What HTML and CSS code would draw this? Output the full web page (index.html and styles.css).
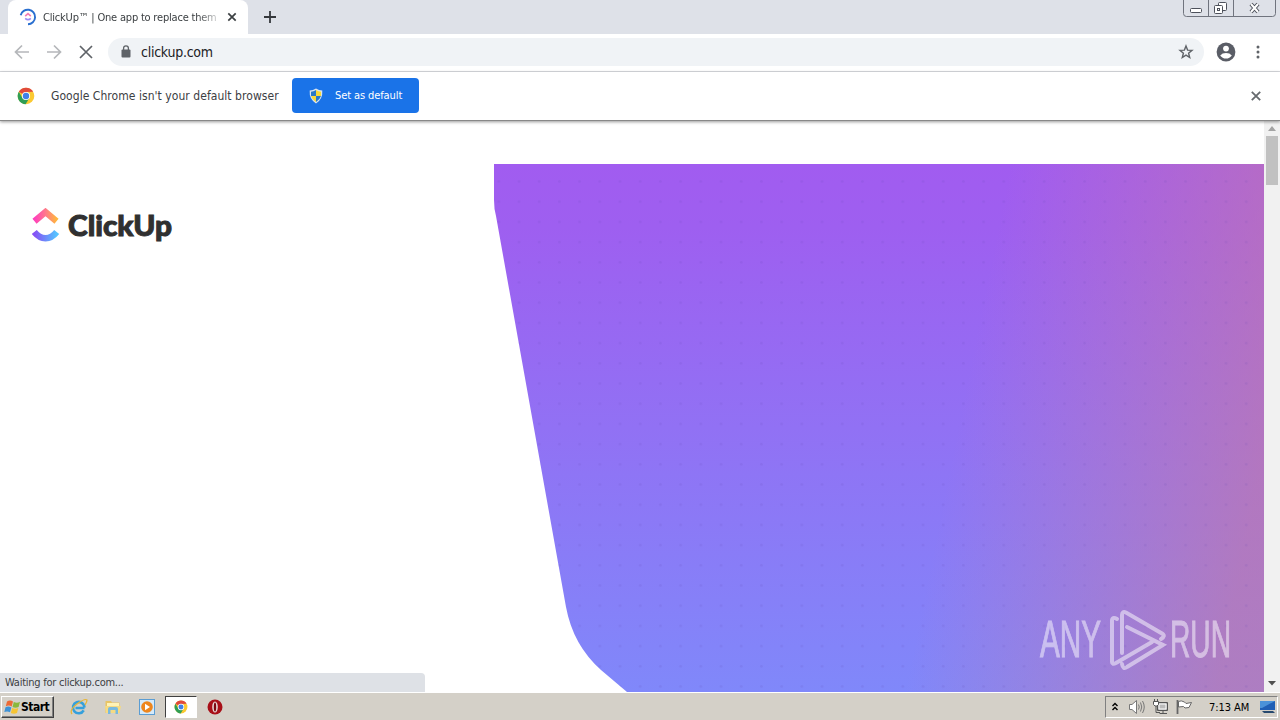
FILE: index.html
```
<!DOCTYPE html>
<html lang="en">
<head>
	<meta charset="utf-8">
	<title>ClickUp™ | One app to replace them all</title>
	<link rel="stylesheet" href="styles.css">
</head>
<body>
	<svg class="defs" width="0" height="0">
		<symbol id="chrome" viewBox="0 0 18 18">
			<circle cx="9" cy="9" r="8.3" fill="#fbc931"/>
			<path d="M9 9 1.8 4.8A8.3 8.3 0 0 1 16.2 4.8L9 5z" fill="#e04a3c"/>
			<path d="M1.8 4.8A8.3 8.3 0 0 0 8.6 17.3L12.4 11 9 9 5.5 11z" fill="#2f9e55"/>
			<circle cx="9" cy="9" r="4.1" fill="#fff"/>
			<circle cx="9" cy="9" r="3.2" fill="#3f80e8"/>
		</symbol>
	</svg>

	<div class="tabstrip">
		<div class="tab">
			<svg class="spinner" width="18" height="18" viewBox="0 0 18 18" fill="none">
				<path d="M1.7 7.2A7.3 7.3 0 1 1 9 16.3" stroke="#2a6fd0" stroke-width="1.9"/>
				<path d="M6.2 8.2 9 5.6 11.8 8.2" stroke="#f27bb5" stroke-width="1.6"/>
				<path d="M6.2 10.3Q9 13 11.8 10.3" stroke="#9b8df5" stroke-width="1.6"/>
			</svg>
			<div class="tab-title">ClickUp™ | One app to replace them</div>
			<svg width="10" height="10" viewBox="0 0 10 10"><path d="M1.3 1.3 8.7 8.7M8.7 1.3 1.3 8.7" stroke="#3c4043" stroke-width="1.7"/></svg>
		</div>
		<svg class="newtab" width="12" height="12" viewBox="0 0 12 12"><path d="M6 0V12M0 6H12" stroke="#35383c" stroke-width="1.8"/></svg>
		<svg class="winctl" width="94" height="18" viewBox="0 0 94 18" fill="none" stroke="#70747e">
			<path d="M.5 0V13.5Q.5 16.5 3.5 16.5H89.5Q92.5 16.5 92.5 13.5V0M25.5 0V16M50.5 0V16"/>
			<rect x="7.5" y="8.5" width="11" height="4" rx="1" fill="#fff" stroke="#4d515b"/>
			<g fill="#fff" stroke="#4d515b"><rect x="35.500" y="2.500" width="8" height="8" rx="1"/><rect x="31.500" y="5.500" width="8" height="8" rx="1"/><rect x="34.500" y="8.500" width="2" height="2"/></g>
			<path d="M68 4 75 12M75 4 68 12" stroke="#4d515b" stroke-width="4"/>
			<path d="M68 4 75 12M75 4 68 12" stroke="#fff" stroke-width="2"/>
		</svg>
	</div>

	<div class="toolbar">
		<svg class="nav" width="84" height="16" viewBox="0 0 84 16" fill="none" stroke-width="1.7">
			<path d="M15 8H2M8 1.5 1.500 8 8 14.500M33 8H46M40 1.500 46.500 8 40 14.500" stroke="#b5b7ba"/>
			<path d="M66 2 78 14M78 2 66 14" stroke="#5f6368"/>
		</svg>
		<div class="omnibox">
			<svg width="10" height="13" viewBox="0 0 10 13"><rect x="0.5" y="4.5" width="9" height="8" rx="1" fill="#5f6368"/><path d="M2.6 5V3.200A2.400 2.400 0 0 1 7.400 3.200V5" fill="none" stroke="#5f6368" stroke-width="1.3"/></svg>
			<span class="url">clickup.com</span>
			<svg width="16" height="16" viewBox="0 0 16 16" fill="none" stroke="#5f6368" stroke-width="1.4"><path d="M8 2 9.600 6.100 14 6.400 10.600 9.200 11.700 13.500 8 11.100 4.300 13.500 5.400 9.200 2 6.400 6.400 6.100z"/></svg>
		</div>
		<svg class="avatar" width="20" height="20" viewBox="0 0 20 20"><circle cx="10" cy="10" r="9.4" fill="#5a5d66"/><circle cx="10" cy="6.6" r="2.9" fill="#fff"/><path d="M4.200 13.400Q6.200 11 10 11T15.800 13.400Q13.700 16.500 10 16.500T4.200 13.400z" fill="#fff"/></svg>
		<svg width="4" height="14" viewBox="0 0 4 14" fill="#5f6368"><circle cx="2" cy="2" r="1.5"/><circle cx="2" cy="7" r="1.5"/><circle cx="2" cy="12" r="1.5"/></svg>
	</div>

	<div class="infobar">
		<svg width="18" height="18"><use href="#chrome"/></svg>
		<span class="info-text">Google Chrome isn't your default browser</span>
		<div class="default-btn">
			<svg width="14" height="16" viewBox="0 0 14 16">
				<path d="M7 .5Q10 2.500 13.300 2.500 14 11 7 15.500 0 11 .7 2.500 4 2.500 7 .5z" fill="#d9e4ef"/>
				<path d="M7 2Q4.500 3.600 2 3.700V8H7z" fill="#2878c8"/>
				<path d="M7 2Q9.500 3.600 12 3.700V8H7z" fill="#f7d838"/>
				<path d="M2 8H7V14Q3 11.500 2 8z" fill="#f7d838"/>
				<path d="M12 8H7V14Q11 11.500 12 8z" fill="#2878c8"/>
			</svg>
			<span>Set as default</span>
		</div>
		<svg class="info-close" width="10" height="10" viewBox="0 0 10 10"><path d="M.8.8 9.200 9.200M9.200.8.8 9.200" stroke="#666a6e" stroke-width="1.8"/></svg>
	</div>

	<div class="viewport">
		<div class="page">
			<div class="brand">
				<svg width="28" height="34" viewBox="0 0 28 34" fill="none">
					<defs>
						<linearGradient id="up"><stop offset="0" stop-color="#ff3fbd"/><stop offset=".55" stop-color="#ff7f85"/><stop offset="1" stop-color="#ffb63d"/></linearGradient>
						<linearGradient id="smile"><stop offset="0" stop-color="#8650f5"/><stop offset="1" stop-color="#55c4ff"/></linearGradient>
					</defs>
					<path d="M2.500 13.300 13.500 4 24.500 13.300" stroke="url(#up)" stroke-width="6.400"/>
					<path d="M2.300 24Q7.200 30.200 13.500 30.200T24.700 24" stroke="url(#smile)" stroke-width="6.400"/>
				</svg>
				<svg class="wordmark" width="120" height="50"><text x="1" y="28" textLength="104" lengthAdjust="spacingAndGlyphs">ClickUp</text></svg>
			</div>
			<svg class="hero" width="770" height="528" viewBox="0 0 770 528">
				<defs>
					<linearGradient id="base" x2="0" y2="1"><stop offset="0" stop-color="#a15cf0"/><stop offset=".12" stop-color="#9e5ff0"/><stop offset=".5" stop-color="#9171f4"/><stop offset="1" stop-color="#8088fa"/></linearGradient>
					<linearGradient id="rose" gradientUnits="userSpaceOnUse" x1="480" y1="180" x2="780" y2="240"><stop offset="0" stop-color="#c878a6" stop-opacity="0"/><stop offset=".4" stop-color="#c878a6" stop-opacity=".26"/><stop offset="1" stop-color="#c778a2" stop-opacity=".64"/></linearGradient>
					<pattern id="dots" width="20.200" height="20.200" x="15" y="7.500" patternUnits="userSpaceOnUse"><circle cx="10" cy="10" r="1.400" fill="#5940b0" fill-opacity=".12"/></pattern>
				</defs>
				<path d="M0 0H770V528H133L107 506Q79 481 72 443L2 52Q0 45 0 36z" fill="url(#base)"/>
				<path d="M400 0H770V528H400z" fill="url(#rose)"/>
				<path d="M0 0H770V528H133L107 506Q79 481 72 443L2 52Q0 45 0 36z" fill="url(#dots)"/>
			</svg>
		</div>
		<div class="scrollbar">
			<svg width="8" height="5" viewBox="0 0 8 5"><path d="M0 5 4 0 8 5z" fill="#a3a3a3"/></svg>
			<div class="thumb"></div>
			<svg class="down" width="8" height="5" viewBox="0 0 8 5"><path d="M0 0H8L4 4.500z" fill="#505050"/></svg>
		</div>
		<div class="status">Waiting for clickup.com...</div>
		<svg class="watermark" width="200" height="70" viewBox="0 0 200 70">
			<text x="1" y="49" textLength="61" lengthAdjust="spacingAndGlyphs">ANY</text>
			<text x="131" y="49" textLength="61" lengthAdjust="spacingAndGlyphs">RUN</text>
			<path d="M78 11Q73 8 73 13V54Q73 57 77 55L113 34M83 45V7Q83 3 87 4.500L123 25.500Q127 28 122 31M88 19 124 37 88 59Q84 62 83 56"/>
		</svg>
	</div>

	<div class="taskbar">
		<div class="start">
			<svg width="17" height="16" viewBox="0 0 17 16">
				<path d="M3 2.500Q6 .5 9 2.500L7.700 7.500Q5 5.800 1.800 7.200z" fill="#ed6a35"/>
				<path d="M9.800 3Q13 4.500 16 2.800L14.600 8Q11.500 9.500 8.500 8z" fill="#8ab83b"/>
				<path d="M1.500 8.200Q4.500 6.800 7.400 8.500L6 13.300Q3.500 11.700.3 13z" fill="#3e92d6"/>
				<path d="M8.200 9Q11.500 10.500 14.300 9L13 14Q10 15.500 6.800 14z" fill="#f6c433"/>
			</svg>
			<span>Start</span>
		</div>
		<svg class="ie" width="18" height="18" viewBox="0 0 18 18" fill="none">
			<path d="M14.500 10H5.500M14.400 9.500A5.700 5.700 0 1 0 13.700 12.300" stroke="#35a0dc" stroke-width="2.600"/>
			<path d="M2 16Q-1 12 7 6T17 2Q17 4 15 7" stroke="#e8b637" stroke-width="1.300"/>
		</svg>
		<svg class="folder" width="18" height="18" viewBox="0 0 18 18">
			<path d="M1.500 3H7L8 4.500H15.500V15H1.500z" fill="#e8c465"/><path d="M3 5H15V9H3z" fill="#fff2b5"/>
			<path d="M1 8H17L15.500 15H2z" fill="#f5da82"/><path d="M4 16V11Q4 9 6 9H12Q14 9 14 11V16H11.500V12H6.500V16z" fill="#78b9df"/>
		</svg>
		<svg class="player" width="18" height="18" viewBox="0 0 18 18"><rect x="1.500" y="1.500" width="15" height="15" fill="#d5eafa" stroke="#5b9dd3"/><circle cx="9" cy="9" r="5.800" fill="#ee861d"/><path d="M7 5.700 12 9 7 12.300z" fill="#fff"/></svg>
		<div class="active"><svg width="14" height="14"><use href="#chrome"/></svg></div>
		<svg class="opera" width="16" height="16" viewBox="0 0 16 16"><circle cx="8" cy="8" r="7.500" fill="#a80f18"/><ellipse cx="8" cy="8" rx="2.800" ry="5.600" fill="#e8d9d7"/><ellipse cx="8" cy="8" rx="1.200" ry="4.600" fill="#7c0810"/></svg>
		<div class="tray">
			<svg width="8" height="10" viewBox="0 0 8 10" fill="none" stroke="#000" stroke-width="1.400"><path d="M1.500 4 4 1.500 6.500 4M1.500 8 4 5.500 6.500 8"/></svg>
			<svg class="sound" width="18" height="16" viewBox="0 0 18 16" fill="none" stroke="#777"><path d="M1.500 5.500H4L8.500 1.500V14.500L4 10.500H1.500z" fill="#fff"/><path d="M10.500 5.500Q12 8 10.500 10.500M12.500 3.500Q15 8 12.500 12.500M14.500 2Q18 8 14.500 14"/></svg>
			<svg class="net" width="17" height="16" viewBox="0 0 17 16" stroke="#555"><path d="M5.500 3.500H15.500V11.500H5.500z" fill="#aaa"/><path d="M7 5H14V10H7z" fill="#bbb" stroke="#fff"/><path d="M7.500 14.500H15M11 12V14" fill="none"/><path d="M1.500 2.500H6.500V5.500L5 7H3L1.500 5.500zM2.500 0V2M5.500 0V2" fill="#fff"/><path d="M4 7V13.500H8" fill="none"/></svg>
			<svg class="flag" width="17" height="16" viewBox="0 0 17 16" stroke="#666"><path d="M2.500 2.500Q5 1 8.500 3L10 4.500 15.500 3.500 13 8.500 9 9 7.500 7.500 2.500 8z" fill="#fff"/><path d="M1.500 1V15" stroke-width="1.800"/></svg>
			<span class="clock">7:13 AM</span>
			<svg width="17" height="14" viewBox="0 0 17 14"><path d="M1 1H16V10H1z" fill="#205fb5"/><path d="M1 1H16L3 8H1z" fill="#4b92d9"/><path d="M3 11H14L16 13H5z" fill="#27496e"/></svg>
		</div>
	</div>
</body>
</html>
```
FILE: styles.css
```
* {
	box-sizing: border-box;
}

body {
	margin: 0;
	width: 1280px;
	height: 720px;
	overflow: hidden;
	display: flex;
	flex-direction: column;
	font: 11px "DejaVu Sans Condensed", "DejaVu Sans", sans-serif;
	font-stretch: condensed;
	color: #3c4043;
	background: #fff;
}

svg {
	display: block;
	flex: none;
}

span, .tab-title, .status {
	white-space: nowrap;
}

.defs {
	position: absolute;
}

/* browser chrome */
.tabstrip {
	display: flex;
	flex: none;
	height: 34px;
	background: #dee1e8;
}

.tab {
	display: flex;
	align-items: center;
	width: 240px;
	margin-left: 8px;
	padding: 0 10px 0 11px;
	background: #fff;
	border-radius: 8px 8px 0 0;
}

.tab-title {
	width: 176px;
	margin: 0 8px 0 6px;
	overflow: hidden;
	letter-spacing: -0.2px;
	-webkit-mask-image: linear-gradient(90deg, #000 155px, transparent 180px);
}

.newtab {
	margin: 11px 0 0 16px;
}

.winctl {
	margin-left: auto;
	margin-right: 3px;
}

.toolbar {
	display: flex;
	flex: none;
	align-items: center;
	height: 38px;
	padding: 0 20px 2px 14px;
	border-bottom: 1px solid #dadce0;
}

.omnibox {
	display: flex;
	align-items: center;
	width: 1096px;
	height: 28px;
	margin-left: 10px;
	padding: 0 10px 0 13px;
	border-radius: 14px;
	background: #f0f3f6;
}

.url {
	flex: 1;
	margin-left: 10px;
	font-size: 14px;
	letter-spacing: -0.25px;
	color: #202124;
}

.avatar {
	margin: 0 20px 0 12px;
}

.infobar {
	display: flex;
	flex: none;
	align-items: center;
	height: 49px;
	padding: 0 19px 1px 17px;
	border-bottom: 1px solid #888;
	box-shadow: 0 1px 3px rgba(0, 0, 0, 0.4);
	position: relative;
	z-index: 1;
}

.info-text {
	width: 229px;
	margin: 0 12px 0 16px;
	font-size: 12px;
	letter-spacing: 0.05px;
}

.default-btn {
	display: flex;
	align-items: center;
	width: 127px;
	height: 35px;
	padding-left: 17px;
	border-radius: 4px;
	background: #1a73e8;
	color: #fff;
}

.default-btn span {
	margin-left: 12px;
	letter-spacing: -0.1px;
}

.info-close {
	margin-left: auto;
}

/* page */
.viewport {
	display: flex;
	flex: none;
	height: 571px;
	position: relative;
	overflow: hidden;
}

.page {
	display: flex;
	width: 1264px;
}

.brand {
	display: flex;
	width: 494px;
	padding: 87px 0 0 32px;
}

.wordmark {
	margin-left: 7px;
}

.wordmark text {
	font: 900 29px Lato, sans-serif;
	fill: #303030;
	stroke: #303030;
	stroke-width: 1;
}

.hero {
	margin-top: 43px;
}

.scrollbar {
	display: flex;
	flex-direction: column;
	align-items: center;
	width: 16px;
	padding: 5px 0 6px;
	background: #f1f1f1;
}

.thumb {
	width: 12px;
	height: 49px;
	margin-top: 5px;
	background: #c1c1c1;
}

.down {
	margin-top: auto;
}

.status {
	position: absolute;
	left: 0;
	bottom: 0;
	width: 425px;
	height: 19px;
	padding-left: 5px;
	line-height: 20px;
	letter-spacing: -0.25px;
	background: #dee1e6;
	border-radius: 0 4px 0 0;
}

.watermark {
	position: absolute;
	left: 1039px;
	top: 487px;
	opacity: 0.5;
}

.watermark text {
	font: 51px "Liberation Sans", sans-serif;
	fill: #fff;
	stroke: #fff;
	stroke-width: 1;
}

.watermark path {
	fill: none;
	stroke: #fff;
	stroke-width: 4;
	stroke-linecap: round;
}

/* taskbar */
.taskbar {
	display: flex;
	flex: none;
	align-items: center;
	height: 28px;
	padding: 1px 2px 0 1px;
	background: #d4d0c8;
	border-top: 1px solid #fff;
	color: #000;
}

.start {
	display: flex;
	align-items: center;
	width: 53px;
	height: 22px;
	padding-left: 2px;
	border: 1px solid;
	border-color: #fff #404040 #404040 #fff;
	box-shadow: inset -1px -1px #808080;
}

.start span {
	font-size: 12px;
	font-weight: bold;
	letter-spacing: -0.5px;
}

.ie {
	margin-left: 16px;
}

.folder, .player {
	margin-left: 16px;
}

.active {
	display: flex;
	align-items: center;
	justify-content: center;
	width: 32px;
	height: 22px;
	margin-left: 9px;
	background: #fff;
	border: 1px solid;
	border-color: #404040 #fff #fff #404040;
}

.opera {
	margin-left: 10px;
}

.tray {
	display: flex;
	align-items: center;
	width: 173px;
	height: 22px;
	margin-left: auto;
	padding-left: 5px;
	border: 1px solid;
	border-color: #808080 #fff #fff #808080;
}

.sound {
	margin-left: 9px;
}

.net {
	margin-left: 6px;
}

.flag {
	margin-left: 7px;
}

.clock {
	width: 42px;
	margin: 0 8px 0 16px;
	letter-spacing: -0.05px;
}
```
